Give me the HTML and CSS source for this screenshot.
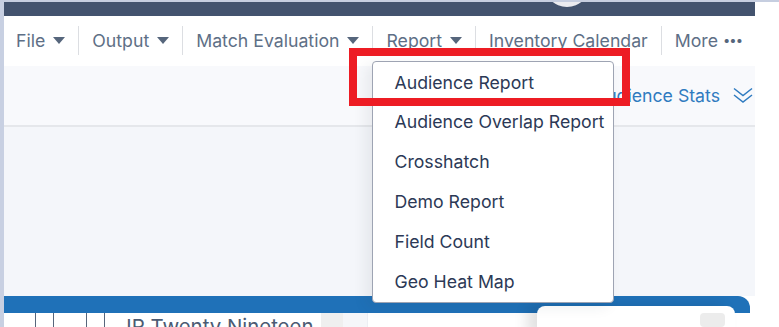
FILE: index.html
```html
<!DOCTYPE html>
<html lang="en">
<head>
  <meta charset="UTF-8">
  <meta name="viewport" content="width=device-width, initial-scale=1.0">
  <title>Reports</title>
  <link rel="stylesheet" href="styles.css">
</head>
<body>

  <div class="app">
    <header class="topbar">
      <div class="avatar"></div>
    </header>

    <nav class="menu">
      <div class="menu-item first">File <span class="caret"></span></div>
      <div class="menu-item">Output <span class="caret"></span></div>
      <div class="menu-item">Match Evaluation <span class="caret"></span></div>
      <div class="menu-item open">Report <span class="caret"></span>
        <ul class="dropdown">
          <li>Audience Report</li>
          <li>Audience Overlap Report</li>
          <li>Crosshatch</li>
          <li>Demo Report</li>
          <li>Field Count</li>
          <li>Geo Heat Map</li>
        </ul>
      </div>
      <div class="menu-item">Inventory Calendar</div>
      <div class="menu-item">More <span class="dots">&bull;&bull;&bull;</span></div>
    </nav>

    <div class="stats-bar">
      <span class="stats-link">Audience Stats</span>
      <svg class="chevrons" width="20" height="17" viewBox="0 0 20 17">
        <path d="M1 1.5 L10 8.5 L19 1.5 M1 8 L10 15 L19 8" fill="none" stroke="#2f7bc0" stroke-width="1.5"/>
      </svg>
    </div>

    <div class="workspace"></div>

    <div class="grid-head"></div>

    <div class="grid-row">
      <div class="cell w31"></div>
      <div class="cell w18"></div>
      <div class="cell w33"></div>
      <div class="cell w18"></div>
      <div class="cell name">JR Twenty Nineteen</div>
      <div class="cell swatch"></div>
      <div class="cell pad"></div>
    </div>

    <div class="side-card">
      <span class="pill"></span>
    </div>
  </div>

  <div class="highlight"></div>

</body>
</html>
```

FILE: styles.css
```css
* {
  box-sizing: border-box;
}
body {
  margin: 0;
  height: 327px;
  overflow: hidden;
  background: #fff;
  border-top: 2px solid #c6cee0;
  font-family: Inter, "Noto Sans", sans-serif;
}
.app {
  position: relative;
  width: 755px;
  border-left: 4px solid #c8d0e2;
  height: 325px;
}
.topbar {
  height: 14px;
  background: #43536e;
  overflow: hidden;
  padding-left: 540px;
}
.avatar {
  width: 46px;
  height: 46px;
  border-radius: 50%;
  background: #ebebef;
  margin-top: -41px;
}

/* main menu */
.menu {
  height: 50px;
  background: #fff;
  display: flex;
  align-items: center;
  padding: 0 0 2px 12px;
}
.menu-item {
  position: relative;
  display: flex;
  align-items: center;
  height: 29px;
  padding: 0 13px 0 13px;
  border-left: 1px solid #dcdee2;
  color: #5e6f86;
  font-size: 17.7px;
  white-space: nowrap;
}
.menu-item.first {
  border-left: none;
  padding-left: 0;
}
.caret {
  display: inline-block;
  margin-left: 8px;
  width: 0;
  height: 0;
  border-left: 6px solid transparent;
  border-right: 6px solid transparent;
  border-top: 7px solid #56667c;
}
.dots {
  margin-left: 5px;
  font-size: 13px;
  letter-spacing: -1px;
  color: #56667c;
}

/* dropdown */
.dropdown {
  position: absolute;
  top: 35px;
  left: -1px;
  width: 242px;
  margin: 0;
  padding: 0;
  list-style: none;
  background: #fff;
  border: 1px solid #9ea4b3;
  border-radius: 4px;
  box-shadow: -6px 4px 14px rgba(40, 50, 70, 0.08);
  z-index: 5;
}
.dropdown li {
  height: 40px;
  line-height: 40px;
  padding-left: 21px;
  color: #2c3956;
  font-size: 17.7px;
}
.dropdown li:first-child {
  line-height: 41px;
}

.stats-bar {
  height: 61px;
  background: #f8f9fc;
  border-bottom: 2px solid #e5e7eb;
  display: flex;
  justify-content: flex-end;
  align-items: center;
  padding: 0 2px 0 0;
}
.stats-link {
  color: #2f7bc0;
  font-size: 17.7px;
  margin-right: 13px;
}
.workspace {
  height: 169px;
  background: #f4f6fa;
}
.grid-head {
  height: 17px;
  margin-right: 5px;
  background: #1f71b8;
  border-top-right-radius: 12px;
}
.grid-row {
  display: flex;
  height: 14px;
  overflow: hidden;
  background: #fff;
}
.cell {
  flex: none;
  height: 14px;
  border-right: 1px solid #56667c;
}
.w31 { width: 32px; }
.w18 { width: 18px; }
.w33 { width: 33px; }
.name {
  border-right: none;
  padding-left: 15px;
  width: 216px;
  color: #4b5b73;
  font-size: 20.4px;
  line-height: 14px;
  padding-top: 7px;
}
.swatch {
  width: 22px;
  background: #efefef;
  border-right: none;
}
.pad {
  width: 25px;
  background: #f5f6f9;
  border-right: 1px solid #eceef3;
}

.side-card {
  position: absolute;
  left: 533px;
  top: 304px;
  width: 198px;
  height: 30px;
  background: #fff;
  border-radius: 8px 8px 0 0;
  box-shadow: -10px 0 14px rgba(0, 0, 0, 0.12);
}
.pill {
  position: absolute;
  left: 163px;
  top: 7px;
  width: 25px;
  height: 14px;
  border-radius: 4px;
  background: #ececec;
}

.highlight {
  position: absolute;
  left: 349px;
  top: 48px;
  width: 281px;
  height: 58px;
  border: 8px solid #ed1c24;
  z-index: 10;
}
```
